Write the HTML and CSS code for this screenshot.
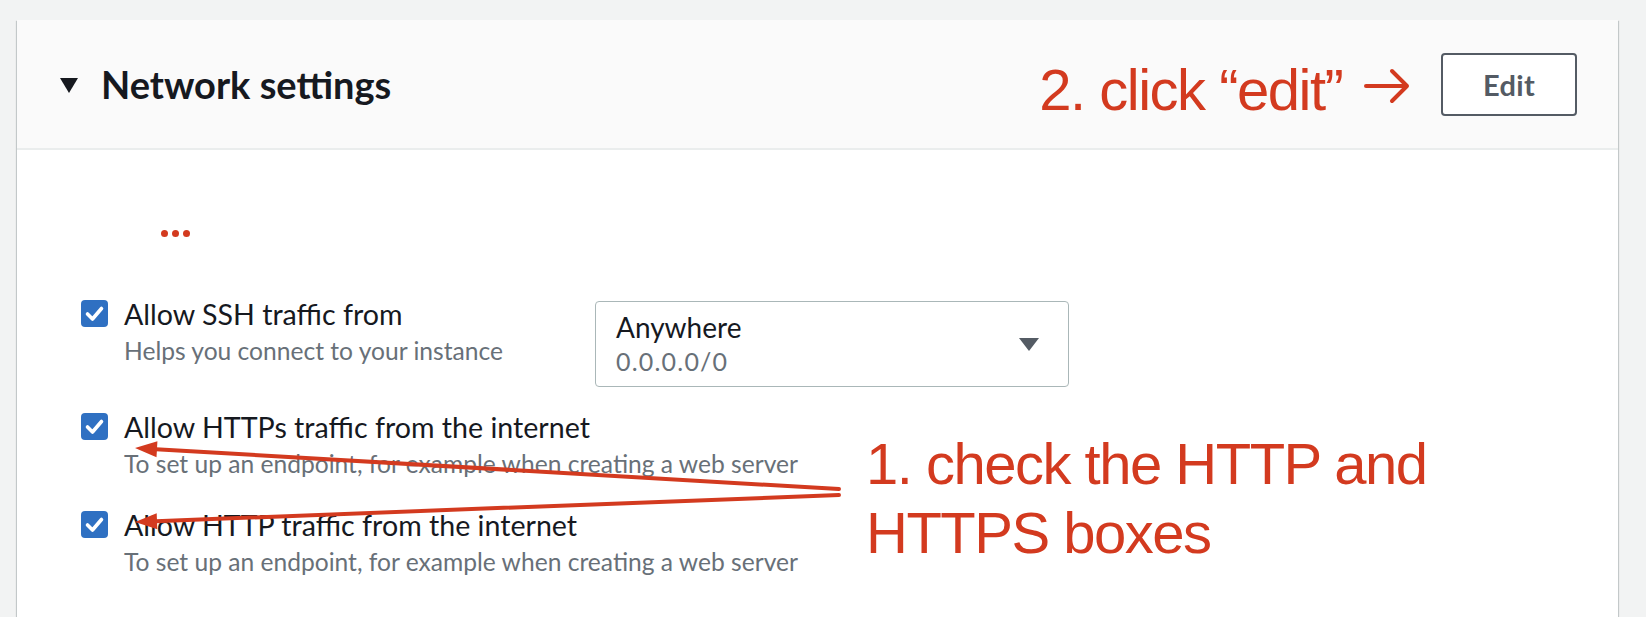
FILE: index.html
```html
<!DOCTYPE html>
<html lang="en">
<head>
<meta charset="utf-8">
<title>Network settings</title>
<link rel="stylesheet" href="styles.css">
</head>
<body>
<div class="page">
  <section class="card">
    <header class="card-header">
      <span class="caret"></span>
      <h2 class="title">Network settings</h2>
      <div class="header-actions">
        <span class="note note-edit">2. click “edit” <svg class="note-arrow" viewBox="0 0 48 40" width="48" height="40"><path d="M3 20 H44 M29 5 L44 20 L29 35" fill="none" stroke="#d33a1f" stroke-width="4" stroke-linecap="round" stroke-linejoin="round"/></svg></span>
        <button class="btn" type="button">Edit</button>
      </div>
    </header>
    <div class="card-body">
      <div class="ellipsis"><i></i><i></i><i></i></div>
      <div class="rules">
        <div class="rule">
          <span class="checkbox"><svg viewBox="0 0 27 27" width="27" height="27"><path d="M6.5 14 L11.5 19 L20.5 8.5" fill="none" stroke="#fff" stroke-width="3.6" stroke-linecap="round" stroke-linejoin="round"/></svg></span>
          <div class="rule-text">
            <div class="label">Allow SSH traffic from</div>
            <div class="desc">Helps you connect to your instance</div>
          </div>
          <div class="select">
            <div class="select-text">
              <div class="select-value">Anywhere</div>
              <div class="select-sub">0.0.0.0/0</div>
            </div>
            <span class="select-caret"></span>
          </div>
        </div>
        <div class="rule">
          <span class="checkbox"><svg viewBox="0 0 27 27" width="27" height="27"><path d="M6.5 14 L11.5 19 L20.5 8.5" fill="none" stroke="#fff" stroke-width="3.6" stroke-linecap="round" stroke-linejoin="round"/></svg></span>
          <div class="rule-text">
            <div class="label">Allow HTTPs traffic from the internet</div>
            <div class="desc">To set up an endpoint, for example when creating a web server</div>
          </div>
        </div>
        <div class="rule">
          <span class="checkbox"><svg viewBox="0 0 27 27" width="27" height="27"><path d="M6.5 14 L11.5 19 L20.5 8.5" fill="none" stroke="#fff" stroke-width="3.6" stroke-linecap="round" stroke-linejoin="round"/></svg></span>
          <div class="rule-text">
            <div class="label">Allow HTTP traffic from the internet</div>
            <div class="desc">To set up an endpoint, for example when creating a web server</div>
          </div>
        </div>
      </div>
      <p class="note note-check">1. check the HTTP and<br>HTTPS boxes</p>
    </div>
  </section>
  <svg class="arrows" width="1646" height="617" viewBox="0 0 1646 617">
    <g stroke="#d33a1f" stroke-width="4" stroke-linecap="round" fill="#d33a1f">
      <line x1="839" y1="489" x2="156" y2="449.3"/>
      <line x1="839" y1="495" x2="156" y2="521.2"/>
    </g>
    <g fill="#d33a1f">
      <polygon points="135,448 157.4,441.3 156.5,457.3"/>
      <polygon points="135,522 157.3,529.2 156.7,513.2"/>
    </g>
  </svg>
</div>
</body>
</html>
```

FILE: styles.css
```css
* { box-sizing: border-box; }

html, body {
  margin: 0;
  padding: 0;
  background: #f2f3f3;
  overflow: hidden;
}

.page {
  position: relative;
  width: 1646px;
  height: 617px;
  padding: 20px 0 0 17px;
  font-family: "Lato", "Open Sans", sans-serif;
  color: #16191f;
}

.card {
  width: 1601px;
  min-height: 640px;
  background: #ffffff;
  box-shadow: 0 1px 1px 0 rgba(0, 28, 36, 0.3), 1px 1px 1px 0 rgba(0, 28, 36, 0.15), -1px 1px 1px 0 rgba(0, 28, 36, 0.15);
}

.card-header {
  height: 130px;
  background: #fafafa;
  border-bottom: 2px solid #eaeded;
  display: flex;
  align-items: center;
  padding: 0 41px 0 43px;
}

.caret {
  width: 0;
  height: 0;
  border-left: 9px solid transparent;
  border-right: 9px solid transparent;
  border-top: 15px solid #16191f;
  margin-right: 23px;
  margin-top: 2px;
}

.title {
  margin: 0;
  font-size: 38px;
  font-weight: 700;
  line-height: 44px;
  letter-spacing: 0;
}

.header-actions {
  margin-left: auto;
  display: flex;
  align-items: center;
  gap: 30px;
}

.note {
  font-family: "Liberation Sans", Arial, sans-serif;
  color: #d33a1f;
  font-size: 58px;
  letter-spacing: -1.5px;
  line-height: 69px;
  margin: 0;
}

.note-edit {
  margin-top: 10px;
  display: flex;
  align-items: center;
  white-space: pre;
}

.note-arrow {
  margin-left: 6px;
  margin-top: -6px;
}

.btn {
  width: 136px;
  height: 63px;
  background: #ffffff;
  border: 2px solid #545b64;
  border-radius: 4px;
  font-family: "Lato", "Open Sans", sans-serif;
  font-weight: 700;
  font-size: 29px;
  color: #545b64;
  padding: 0;
  letter-spacing: 0.3px;
}

.card-body {
  position: relative;
  padding: 80px 0 0 64px;
}

.ellipsis {
  display: flex;
  gap: 4px;
  margin-left: 80px;
  height: 7px;
}

.ellipsis i {
  width: 7px;
  height: 7px;
  border-radius: 50%;
  background: #d33a1f;
}

.rules {
  margin-top: 59px;
  display: flex;
  flex-direction: column;
  gap: 25px;
}

.rule {
  display: flex;
  align-items: flex-start;
}

.checkbox {
  width: 27px;
  height: 27px;
  margin-top: 4px;
  border-radius: 4px;
  background: #2f70c2;
  display: flex;
  flex: none;
}

.rule-text {
  margin-left: 16px;
  width: 471px;
  flex: none;
}

.label {
  font-size: 28.6px;
  line-height: 36px;
  white-space: nowrap;
}

.desc {
  font-size: 24.6px;
  line-height: 36px;
  color: #687078;
  white-space: nowrap;
  margin-top: 1px;
}

.select {
  width: 474px;
  height: 86px;
  margin-top: 5px;
  margin-bottom: -3px;
  border: 1.5px solid #aab7b8;
  border-radius: 4px;
  display: flex;
  align-items: center;
  padding: 0 29px 0 20px;
}

.select-text {
  flex: 1;
}

.select-value {
  font-size: 28px;
  line-height: 34px;
}

.select-sub {
  font-size: 25px;
  line-height: 34px;
  letter-spacing: 1.2px;
  color: #687078;
}

.select-caret {
  width: 0;
  height: 0;
  border-left: 10px solid transparent;
  border-right: 10px solid transparent;
  border-top: 13px solid #545b64;
}

.note-check {
  position: absolute;
  left: 849px;
  top: 279px;
}

.arrows {
  position: absolute;
  left: 0;
  top: 0;
  pointer-events: none;
}
```
